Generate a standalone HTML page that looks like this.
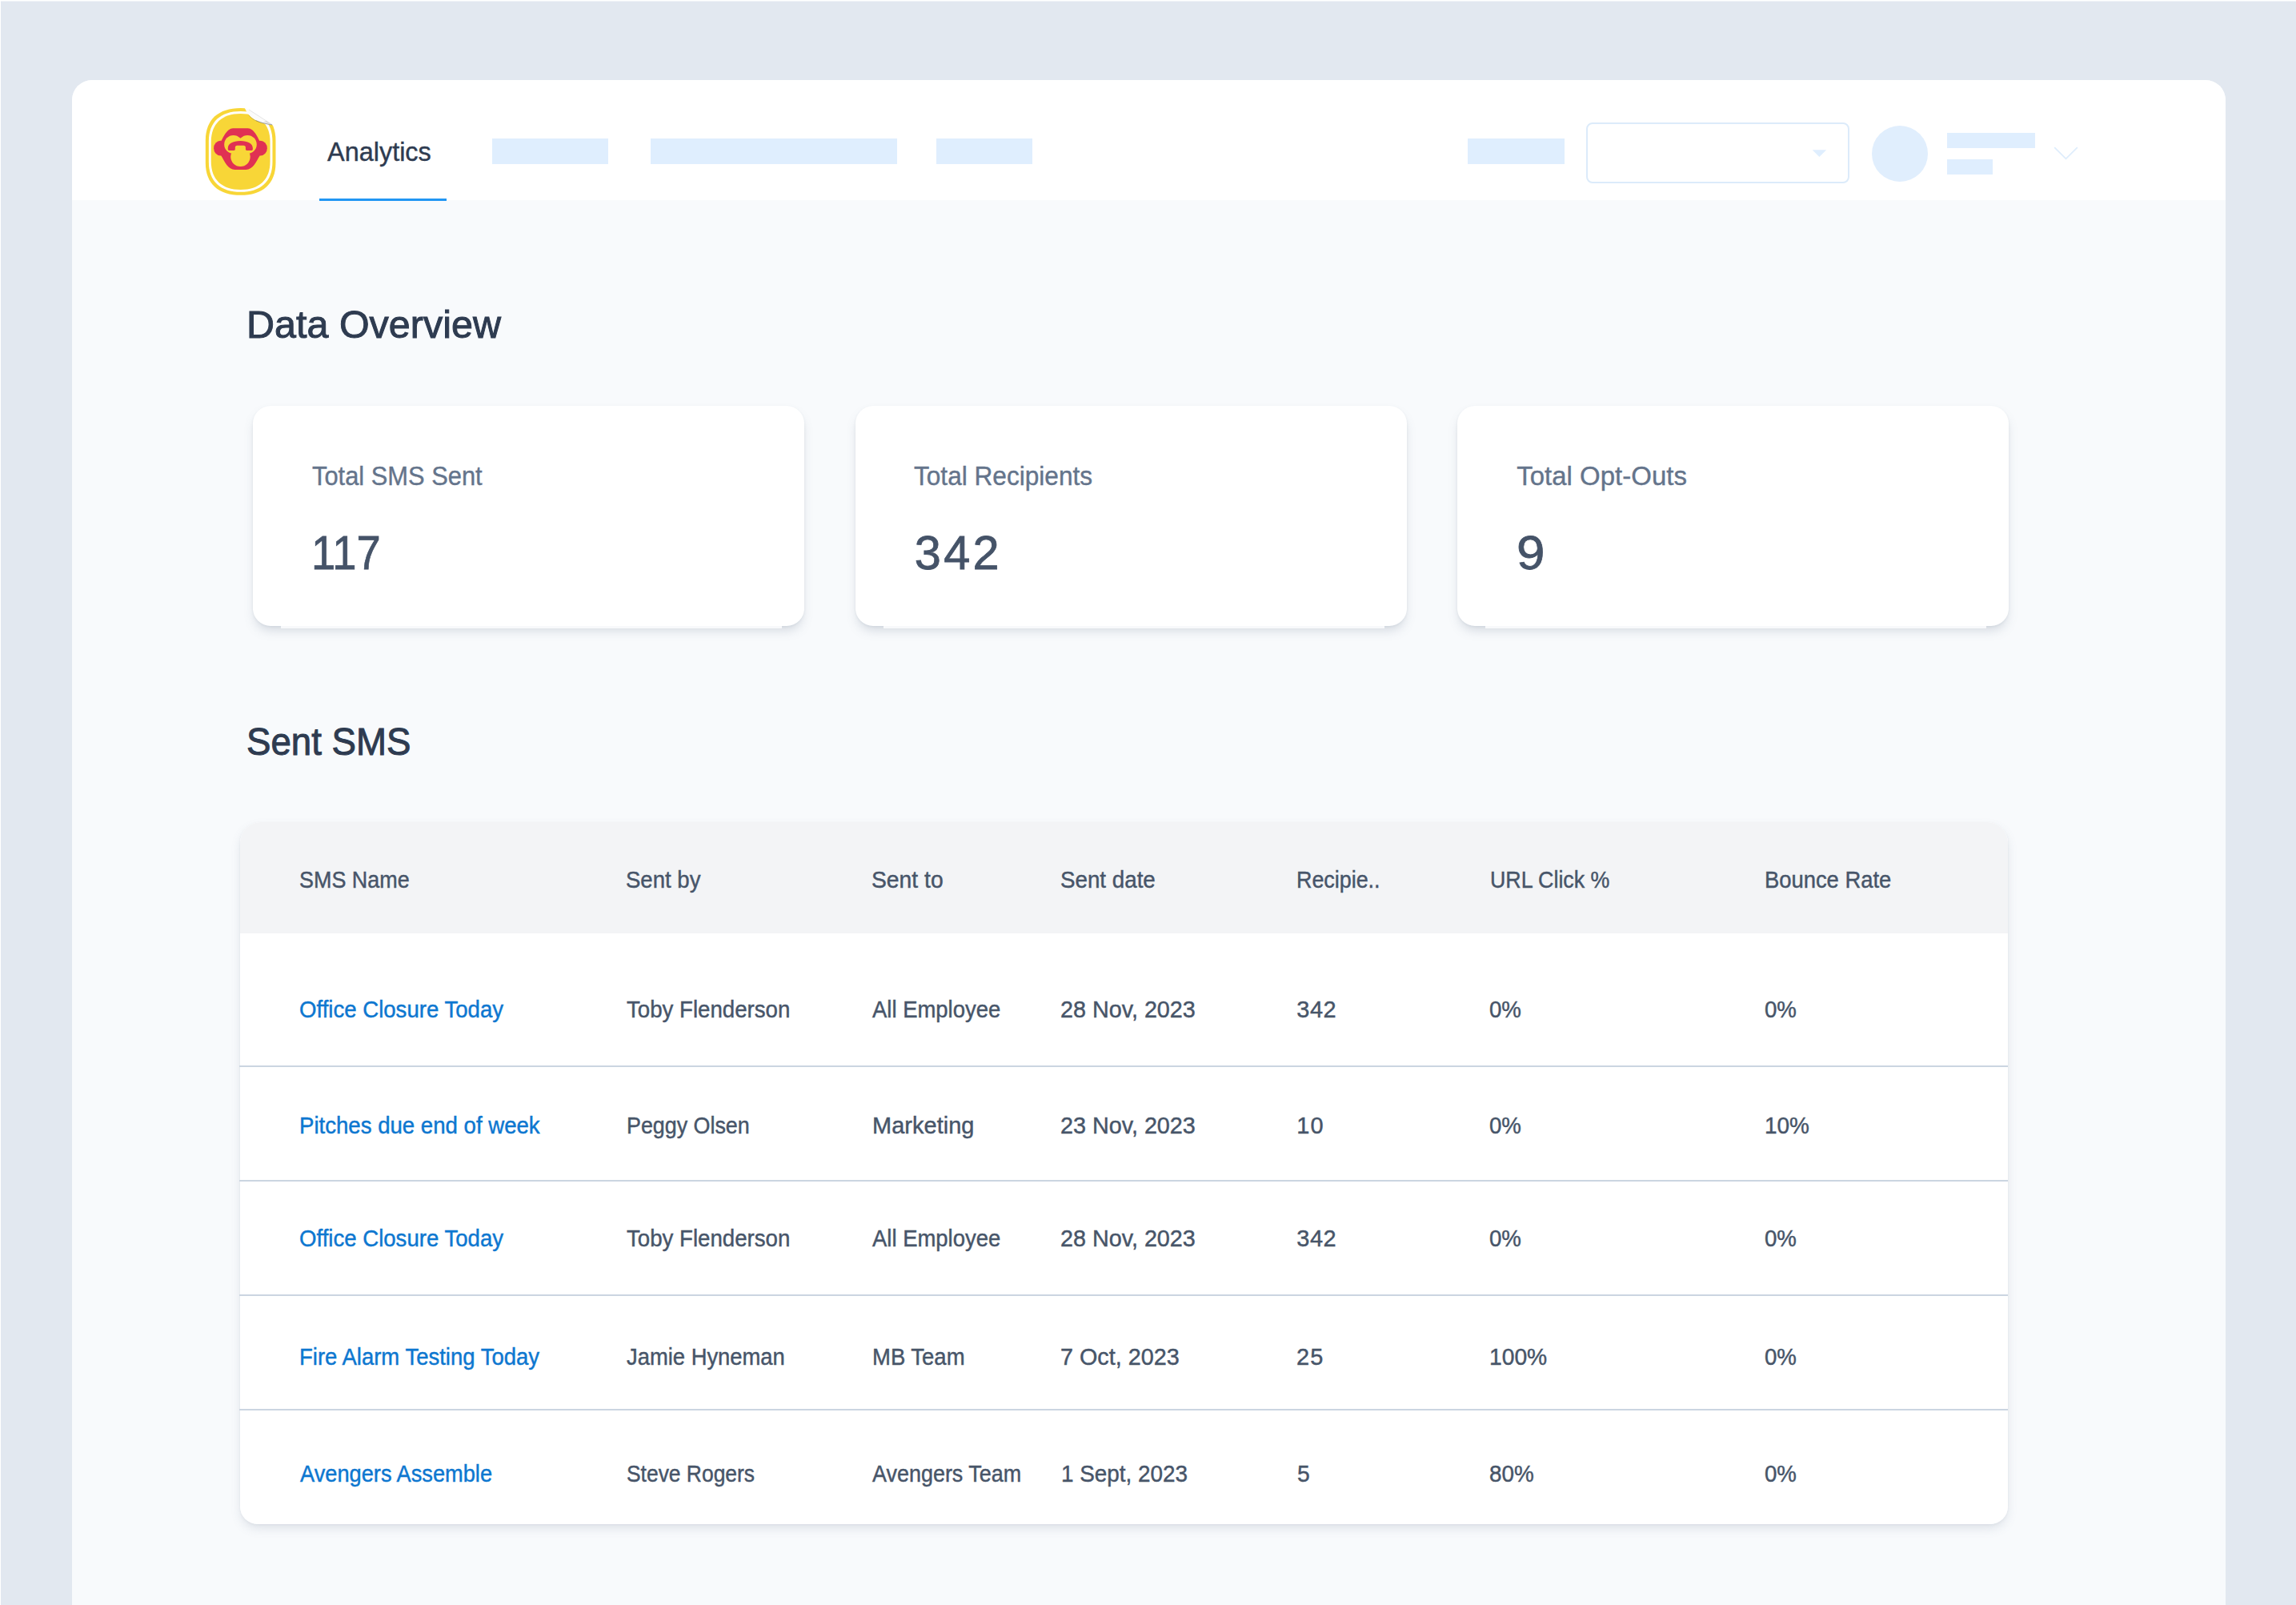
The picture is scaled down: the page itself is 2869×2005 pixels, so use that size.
<!DOCTYPE html>
<html lang="en">
<head>
<meta charset="utf-8">
<title>Analytics</title>
<style>
*{box-sizing:border-box;margin:0;padding:0}
html,body{width:2869px;height:2005px;overflow:hidden;background:#E2E8F0;font-family:"Liberation Sans",sans-serif}
body{position:relative}
.abs,.t,.ph{position:absolute}
.t{white-space:nowrap;font-kerning:normal;transform-origin:0 0}
.edge-t{left:0;top:0;width:2869px;height:1px;background:#fff}
.edge-t2{left:0;top:1px;width:2869px;height:1px;background:rgba(255,255,255,.5)}
.edge-l{left:0;top:0;width:1px;height:2005px;background:#fff}
.main{left:90px;top:100px;width:2691px;height:1960px;background:#F8FAFC;border-radius:25px 25px 0 0;overflow:hidden}
.hdr{left:0;top:0;width:2691px;height:150px;background:#fff}
.ph{background:#DFEEFE}
.uline{left:399px;top:248px;width:158.5px;height:3px;background:#2196F3}
.sel{left:1982px;top:153px;width:329px;height:75.5px;border:2px solid #DCEBFA;border-radius:8px;background:#fff}
.card{width:689px;height:275px;top:507px;background:#fff;border-radius:22px;box-shadow:0 8px 14px -3px rgba(100,116,139,.25),0 1px 3px rgba(100,116,139,.10)}
.card i{position:absolute;left:35px;right:28px;bottom:-3px;height:3px;background:#F8F9FB}
.tbl{left:300px;top:1027px;width:2208.5px;height:876.5px;background:#fff;border-radius:26px 26px 22px 22px;overflow:hidden}
.tblsh{left:300px;top:1027px;width:2208.5px;height:876.5px;border-radius:26px 26px 22px 22px;box-shadow:0 6px 14px -2px rgba(100,116,139,.2),0 1px 3px rgba(100,116,139,.08)}
.thead{left:0;top:0;width:100%;height:138.7px;background:#F3F4F6}
.sep{left:299px;width:2210px;height:2px;background:#CBD5E1}
</style>
</head>
<body>
<div class="abs main">
  <div class="abs hdr"></div>
</div>
<div class="abs edge-t"></div><div class="abs edge-t2"></div><div class="abs edge-l"></div>

<!-- header placeholders -->
<div class="abs uline"></div>
<div class="ph" style="left:615px;top:173px;width:145.3px;height:32px"></div>
<div class="ph" style="left:813.2px;top:173px;width:307.4px;height:32px"></div>
<div class="ph" style="left:1169.5px;top:173px;width:120.4px;height:32px"></div>
<div class="ph" style="left:1833.7px;top:173px;width:121px;height:32px"></div>
<div class="abs sel"></div>
<svg class="abs" style="left:2263px;top:186px" width="21" height="11" viewBox="0 0 21 11"><path d="M1.6 1.2h17.6L10.4 10z" fill="#DFEEFE"/></svg>
<div class="ph" style="left:2338.8px;top:156.6px;width:70.4px;height:70.4px;border-radius:50%;background:#E0EEFD"></div>
<div class="ph" style="left:2433px;top:166px;width:109.5px;height:18.9px"></div>
<div class="ph" style="left:2433px;top:199px;width:57.4px;height:18.8px"></div>
<svg class="abs" style="left:2565px;top:182px" width="33" height="19" viewBox="0 0 33 19"><path d="M2.2 2.2L16.5 16.3 30.8 2.2" fill="none" stroke="#DEEDFC" stroke-width="1.7"/></svg>

<!--LOGO_START-->
<svg class="abs" style="left:230px;top:110px" width="150" height="150" viewBox="0 0 1605 1605">
  <path d="M756 268C1050 268 1225 420 1225 700V1000C1225 1280 1050 1432 756 1432C462 1432 287 1280 287 1000V700C287 420 462 268 756 268Z" fill="#F8D637"/>
  <path d="M756 268C1050 268 1225 420 1225 700V1000C1225 1280 1050 1432 756 1432C462 1432 287 1280 287 1000V700C287 420 462 268 756 268Z" fill="#ffffff" transform="translate(756 850) scale(0.908 0.926) translate(-756 -850)"/>
  <path d="M756 268C1050 268 1225 420 1225 700V1000C1225 1280 1050 1432 756 1432C462 1432 287 1280 287 1000V700C287 420 462 268 756 268Z" fill="#F8D637" transform="translate(756 850) scale(0.842 0.873) translate(-756 -850)"/>
  <g fill="#E03153">
    <ellipse cx="487" cy="804" rx="90" ry="100"/><ellipse cx="1021" cy="804" rx="90" ry="100"/>
    <path d="M494 714C514 674 574 537 654 537H854C934 537 994 674 1014 714V901C961 987 921 1091 827 1091H681C587 1091 547 987 494 901Z"/>
  </g>
  <g fill="#F8D637">
    <circle cx="660" cy="754" r="123"/><circle cx="848" cy="754" r="123"/>
    <circle cx="754" cy="918" r="131"/>
    
  </g>
  <path fill="#E03153" d="M586 805C586 745 652 707 753 707C854 707 919 745 919 805V818Q919 834 903 834H839Q823 834 823 818V795Q823 767 795 767H711Q683 767 683 795V818Q683 834 667 834H602Q586 834 586 818Z"/>
  <path d="M800 240C850 368 950 468 1185 496L1300 520V200H800Z" fill="#ffffff"/>
  <path d="M820 268C850 370 950 465 1178 491L868 290Z" fill="#fbfbfb"/>
  <path d="M870 365C905 415 975 462 1178 491" stroke="#444" stroke-opacity=".35" stroke-width="7" fill="none"/>
  <path d="M960 432C1010 458 1080 478 1178 491" stroke="#333" stroke-opacity=".5" stroke-width="7" fill="none"/>
  <path d="M1178 491L1100 440L1060 452Z" fill="#ccc" fill-opacity=".6"/>
  <path d="M868 290L1178 489" stroke="#888" stroke-opacity=".45" stroke-width="5" fill="none"/>
</svg>
<!--LOGO_END-->

<!-- stat cards -->
<div class="abs card" style="left:316px"><i></i></div>
<div class="abs card" style="left:1069px"><i></i></div>
<div class="abs card" style="left:1821px"><i></i></div>

<!-- table -->
<div class="abs tblsh"></div>
<div class="abs tbl">
  <div class="abs thead"></div>
</div>
<div class="abs sep" style="top:1331px"></div>
<div class="abs sep" style="top:1474px"></div>
<div class="abs sep" style="top:1617px"></div>
<div class="abs sep" style="top:1760px"></div>

<span class="t" style="left:409.47px;top:173px;font-size:33.47px;line-height:33.47px;transform:scaleX(0.9690);color:#2E3B50;-webkit-text-stroke:0.4px #2E3B50;">Analytics</span>
<span class="t" style="left:308.19px;top:381px;font-size:49.0px;line-height:49.0px;transform:scaleX(0.9896);color:#2E3B50;-webkit-text-stroke:1.0px #2E3B50;">Data Overview</span>
<span class="t" style="left:307.81px;top:902px;font-size:49.0px;line-height:49.0px;transform:scaleX(0.9316);color:#2E3B50;-webkit-text-stroke:1.0px #2E3B50;">Sent SMS</span>
<span class="t" style="left:390.07px;top:579px;font-size:32.9px;line-height:32.9px;transform:scaleX(0.9381);color:#64748B;-webkit-text-stroke:0.4px #64748B;">Total SMS Sent</span>
<span class="t" style="left:388.64px;top:661px;font-size:59.59px;line-height:59.59px;transform:scaleX(0.9119);color:#455368;-webkit-text-stroke:0.8px #455368;">117</span>
<span class="t" style="left:1141.62px;top:579px;font-size:32.9px;line-height:32.9px;transform:scaleX(0.9607);color:#64748B;-webkit-text-stroke:0.4px #64748B;">Total Recipients</span>
<span class="t" style="left:1142.73px;top:661px;font-size:59.59px;line-height:59.59px;letter-spacing:3.303px;color:#455368;-webkit-text-stroke:0.8px #455368;">342</span>
<span class="t" style="left:1895.18px;top:579px;font-size:32.9px;line-height:32.9px;letter-spacing:0.050px;color:#64748B;-webkit-text-stroke:0.4px #64748B;">Total Opt-Outs</span>
<span class="t" style="left:1895.03px;top:661px;font-size:59.59px;line-height:59.59px;transform:scaleX(1.0689);color:#455368;-webkit-text-stroke:0.8px #455368;">9</span>
<span class="t" style="left:374.24px;top:1085px;font-size:28.92px;line-height:28.92px;transform:scaleX(0.9316);color:#475569;-webkit-text-stroke:0.45px #475569;">SMS Name</span>
<span class="t" style="left:781.80px;top:1085px;font-size:28.92px;line-height:28.92px;transform:scaleX(0.9528);color:#475569;-webkit-text-stroke:0.45px #475569;">Sent by</span>
<span class="t" style="left:1089.09px;top:1085px;font-size:28.92px;line-height:28.92px;transform:scaleX(0.9787);color:#475569;-webkit-text-stroke:0.45px #475569;">Sent to</span>
<span class="t" style="left:1324.77px;top:1085px;font-size:28.92px;line-height:28.92px;transform:scaleX(0.9599);color:#475569;-webkit-text-stroke:0.45px #475569;">Sent date</span>
<span class="t" style="left:1620.30px;top:1085px;font-size:28.92px;line-height:28.92px;transform:scaleX(0.9292);color:#475569;-webkit-text-stroke:0.45px #475569;">Recipie..</span>
<span class="t" style="left:1861.62px;top:1085px;font-size:28.92px;line-height:28.92px;transform:scaleX(0.9274);color:#475569;-webkit-text-stroke:0.45px #475569;">URL Click %</span>
<span class="t" style="left:2204.82px;top:1085px;font-size:28.92px;line-height:28.92px;transform:scaleX(0.9469);color:#475569;-webkit-text-stroke:0.45px #475569;">Bounce Rate</span>
<span class="t" style="left:374.20px;top:1247px;font-size:28.92px;line-height:28.92px;transform:scaleX(0.9544);color:#0D77D0;-webkit-text-stroke:0.45px #0D77D0;">Office Closure Today</span>
<span class="t" style="left:782.50px;top:1247px;font-size:28.92px;line-height:28.92px;transform:scaleX(0.9560);color:#475569;-webkit-text-stroke:0.45px #475569;">Toby Flenderson</span>
<span class="t" style="left:1090.15px;top:1247px;font-size:28.92px;line-height:28.92px;transform:scaleX(0.9501);color:#475569;-webkit-text-stroke:0.45px #475569;">All Employee</span>
<span class="t" style="left:1324.71px;top:1247px;font-size:28.92px;line-height:28.92px;transform:scaleX(0.9941);color:#475569;-webkit-text-stroke:0.45px #475569;">28 Nov, 2023</span>
<span class="t" style="left:1620.19px;top:1247px;font-size:28.92px;line-height:28.92px;letter-spacing:0.612px;color:#475569;-webkit-text-stroke:0.45px #475569;">342</span>
<span class="t" style="left:1861.04px;top:1247px;font-size:28.92px;line-height:28.92px;transform:scaleX(0.9556);color:#475569;-webkit-text-stroke:0.45px #475569;">0%</span>
<span class="t" style="left:2204.64px;top:1247px;font-size:28.92px;line-height:28.92px;transform:scaleX(0.9556);color:#475569;-webkit-text-stroke:0.45px #475569;">0%</span>
<span class="t" style="left:374.27px;top:1392px;font-size:28.92px;line-height:28.92px;transform:scaleX(0.9546);color:#0D77D0;-webkit-text-stroke:0.45px #0D77D0;">Pitches due end of week</span>
<span class="t" style="left:783.32px;top:1392px;font-size:28.92px;line-height:28.92px;transform:scaleX(0.9285);color:#475569;-webkit-text-stroke:0.45px #475569;">Peggy Olsen</span>
<span class="t" style="left:1090.12px;top:1392px;font-size:28.92px;line-height:28.92px;letter-spacing:0.041px;color:#475569;-webkit-text-stroke:0.45px #475569;">Marketing</span>
<span class="t" style="left:1324.71px;top:1392px;font-size:28.92px;line-height:28.92px;transform:scaleX(0.9941);color:#475569;-webkit-text-stroke:0.45px #475569;">23 Nov, 2023</span>
<span class="t" style="left:1620.32px;top:1392px;font-size:28.92px;line-height:28.92px;letter-spacing:1.214px;color:#475569;-webkit-text-stroke:0.45px #475569;">10</span>
<span class="t" style="left:1861.04px;top:1392px;font-size:28.92px;line-height:28.92px;transform:scaleX(0.9556);color:#475569;-webkit-text-stroke:0.45px #475569;">0%</span>
<span class="t" style="left:2205.04px;top:1392px;font-size:28.92px;line-height:28.92px;transform:scaleX(0.9656);color:#475569;-webkit-text-stroke:0.45px #475569;">10%</span>
<span class="t" style="left:374.20px;top:1533px;font-size:28.92px;line-height:28.92px;transform:scaleX(0.9544);color:#0D77D0;-webkit-text-stroke:0.45px #0D77D0;">Office Closure Today</span>
<span class="t" style="left:782.50px;top:1533px;font-size:28.92px;line-height:28.92px;transform:scaleX(0.9560);color:#475569;-webkit-text-stroke:0.45px #475569;">Toby Flenderson</span>
<span class="t" style="left:1090.15px;top:1533px;font-size:28.92px;line-height:28.92px;transform:scaleX(0.9501);color:#475569;-webkit-text-stroke:0.45px #475569;">All Employee</span>
<span class="t" style="left:1324.71px;top:1533px;font-size:28.92px;line-height:28.92px;transform:scaleX(0.9941);color:#475569;-webkit-text-stroke:0.45px #475569;">28 Nov, 2023</span>
<span class="t" style="left:1620.19px;top:1533px;font-size:28.92px;line-height:28.92px;letter-spacing:0.612px;color:#475569;-webkit-text-stroke:0.45px #475569;">342</span>
<span class="t" style="left:1861.04px;top:1533px;font-size:28.92px;line-height:28.92px;transform:scaleX(0.9556);color:#475569;-webkit-text-stroke:0.45px #475569;">0%</span>
<span class="t" style="left:2204.64px;top:1533px;font-size:28.92px;line-height:28.92px;transform:scaleX(0.9556);color:#475569;-webkit-text-stroke:0.45px #475569;">0%</span>
<span class="t" style="left:374.30px;top:1681px;font-size:28.92px;line-height:28.92px;transform:scaleX(0.9511);color:#0D77D0;-webkit-text-stroke:0.45px #0D77D0;">Fire Alarm Testing Today</span>
<span class="t" style="left:783.05px;top:1681px;font-size:28.92px;line-height:28.92px;transform:scaleX(0.9472);color:#475569;-webkit-text-stroke:0.45px #475569;">Jamie Hyneman</span>
<span class="t" style="left:1090.04px;top:1681px;font-size:28.92px;line-height:28.92px;transform:scaleX(0.9506);color:#475569;-webkit-text-stroke:0.45px #475569;">MB Team</span>
<span class="t" style="left:1324.66px;top:1681px;font-size:28.92px;line-height:28.92px;transform:scaleX(0.9946);color:#475569;-webkit-text-stroke:0.45px #475569;">7 Oct, 2023</span>
<span class="t" style="left:1619.90px;top:1681px;font-size:28.92px;line-height:28.92px;letter-spacing:1.159px;color:#475569;-webkit-text-stroke:0.45px #475569;">25</span>
<span class="t" style="left:1861.39px;top:1681px;font-size:28.92px;line-height:28.92px;transform:scaleX(0.9766);color:#475569;-webkit-text-stroke:0.45px #475569;">100%</span>
<span class="t" style="left:2204.64px;top:1681px;font-size:28.92px;line-height:28.92px;transform:scaleX(0.9556);color:#475569;-webkit-text-stroke:0.45px #475569;">0%</span>
<span class="t" style="left:374.63px;top:1827px;font-size:28.92px;line-height:28.92px;transform:scaleX(0.9416);color:#0D77D0;-webkit-text-stroke:0.45px #0D77D0;">Avengers Assemble</span>
<span class="t" style="left:782.70px;top:1827px;font-size:28.92px;line-height:28.92px;transform:scaleX(0.9136);color:#475569;-webkit-text-stroke:0.45px #475569;">Steve Rogers</span>
<span class="t" style="left:1090.15px;top:1827px;font-size:28.92px;line-height:28.92px;transform:scaleX(0.9320);color:#475569;-webkit-text-stroke:0.45px #475569;">Avengers Team</span>
<span class="t" style="left:1325.65px;top:1827px;font-size:28.92px;line-height:28.92px;transform:scaleX(0.9629);color:#475569;-webkit-text-stroke:0.45px #475569;">1 Sept, 2023</span>
<span class="t" style="left:1621.21px;top:1827px;font-size:28.92px;line-height:28.92px;transform:scaleX(0.9769);color:#475569;-webkit-text-stroke:0.45px #475569;">5</span>
<span class="t" style="left:1860.77px;top:1827px;font-size:28.92px;line-height:28.92px;transform:scaleX(0.9633);color:#475569;-webkit-text-stroke:0.45px #475569;">80%</span>
<span class="t" style="left:2204.64px;top:1827px;font-size:28.92px;line-height:28.92px;transform:scaleX(0.9556);color:#475569;-webkit-text-stroke:0.45px #475569;">0%</span>
</body>
</html>
